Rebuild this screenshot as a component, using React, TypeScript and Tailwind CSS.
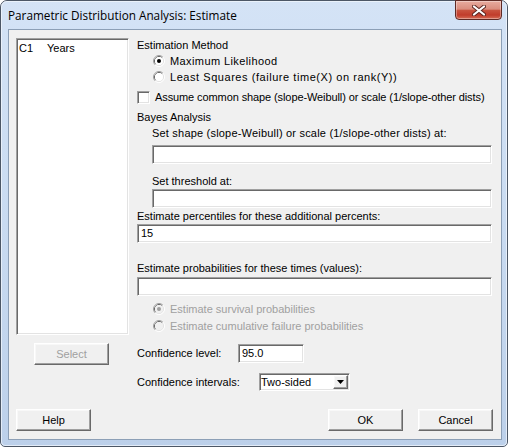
import React from "react";

const dlg =
  "font-['Liberation_Sans',Arial,sans-serif] text-[11px] leading-[13px] tracking-[0px] text-black";

const sunken =
  "border border-t-[#a0a0a0] border-l-[#a0a0a0] border-b-white border-r-white shadow-[inset_1px_1px_0_#696969,inset_-1px_-1px_0_#e3e3e3] bg-white";

const raised =
  "border border-t-white border-l-white border-b-[#696969] border-r-[#696969] shadow-[inset_-1px_-1px_0_#a0a0a0,inset_1px_1px_0_#f8f8f8] bg-[#f0f0f0]";

function Radio({ checked, disabled }: { checked?: boolean; disabled?: boolean }) {
  return (
    <svg width="12" height="12" viewBox="0 0 12 12" className="shrink-0">
      <path d="M2.11 9.89A5.5 5.5 0 0 1 9.89 2.11" fill="none" stroke="#a0a0a0" />
      <path d="M9.89 2.11A5.5 5.5 0 0 1 2.11 9.89" fill="none" stroke="#ffffff" />
      <path d="M2.82 9.18A4.5 4.5 0 0 1 9.18 2.82" fill="none" stroke="#696969" />
      <path d="M9.18 2.82A4.5 4.5 0 0 1 2.82 9.18" fill="none" stroke="#e3e3e3" />
      <circle cx="6" cy="6" r="4" fill={disabled ? "#f0f0f0" : "#ffffff"} />
      {checked && <circle cx="6" cy="6" r="2" fill={disabled ? "#a0a0a0" : "#000000"} />}
    </svg>
  );
}

function Button({ label, disabled, className }: { label: string; disabled?: boolean; className?: string }) {
  return (
    <div
      className={`w-[75px] h-[22px] flex items-center justify-center ${raised} ${
        disabled ? "text-[#a0a0a0]" : "text-black"
      } ${className ?? ""}`}
    >
      {label}
    </div>
  );
}

export default function App() {
  return (
    <div className="relative w-[508px] h-[447px] rounded-t-[7px] rounded-b-[5px] border border-[#4c5766] bg-gradient-to-b from-[#d4e3f6] via-[#c9dbf1] to-[#bcd0ea]">
      <div className="flex flex-col w-full h-full rounded-t-[6px] rounded-b-[4px] border border-[#f4f8fd]/70">
        <div className="h-[27px] shrink-0 flex items-center pl-[6px] font-['Open_Sans',sans-serif] text-[11.75px] text-black">
          Parametric Distribution Analysis: Estimate
        </div>
        <div
          className={`ml-[6px] w-[494px] h-[411px] shrink-0 border border-[#8c9fb6] bg-[#f0f0f0] flex flex-col ${dlg}`}
        >
          <div className="flex pl-[7px] pt-[7px]">
            {/* left column */}
            <div className="flex flex-col w-[113px] mt-[1px]">
              <div className={`h-[297px] ${sunken} pl-[2px] pt-[1px]`}>
                <div className="flex h-[16px] items-center">
                  <span className="w-[28px]">C1</span>
                  <span>Years</span>
                </div>
              </div>
              <Button label="Select" disabled className="mt-[8px] ml-[18px]" />
            </div>

            {/* right column */}
            <div className="ml-[8px] w-[355px] flex flex-col">
              <div className="h-[16px] flex items-center">Estimation Method</div>
              <div className="h-[16px] flex items-center pl-[16px] gap-[5px]">
                <Radio checked />
                <span className="tracking-[0.4px]">Maximum Likelihood</span>
              </div>
              <div className="h-[16px] flex items-center pl-[16px] gap-[5px]">
                <Radio />
                <span className="tracking-[0.55px]">Least Squares (failure time(X) on rank(Y))</span>
              </div>
              <div className="mt-[4px] h-[16px] flex items-center gap-[5px]">
                <div className={`w-[13px] h-[13px] shrink-0 ${sunken}`} />
                <span className="tracking-[-0.1px]">Assume common shape (slope-Weibull) or scale (1/slope-other dists)</span>
              </div>
              <div className="mt-[4px] h-[16px] flex items-center">Bayes Analysis</div>
              <div className="h-[16px] flex items-center pl-[15px] tracking-[0.2px]">
                Set shape (slope-Weibull) or scale (1/slope-other dists) at:
              </div>
              <div className={`mt-[4px] ml-[15px] w-[340px] h-[19px] ${sunken}`} />
              <div className="mt-[9px] h-[16px] flex items-center pl-[15px]">Set threshold at:</div>
              <div className={`ml-[15px] w-[340px] h-[19px] ${sunken}`} />
              <div className="h-[16px] flex items-center">Estimate percentiles for these additional percents:</div>
              <div className={`w-[355px] h-[19px] ${sunken} flex items-center pl-[3px]`}>15</div>
              <div className="mt-[17px] h-[16px] flex items-center">Estimate probabilities for these times (values):</div>
              <div className={`mt-[1px] w-[355px] h-[19px] ${sunken}`} />
              <div className="mt-[5px] h-[16px] flex items-center pl-[16px] gap-[5px] text-[#a0a0a0]">
                <Radio checked disabled />
                <span>Estimate survival probabilities</span>
              </div>
              <div className="mt-[1px] h-[16px] flex items-center pl-[16px] gap-[5px] text-[#a0a0a0]">
                <Radio disabled />
                <span>Estimate cumulative failure probabilities</span>
              </div>
              <div className="mt-[10px] h-[19px] flex items-center">
                <span className="w-[101px]">Confidence level:</span>
                <div className={`w-[66px] h-[19px] ${sunken} flex items-center pl-[3px]`}>95.0</div>
              </div>
              <div className="mt-[10px] h-[18px] flex items-center">
                <span className="w-[122px]">Confidence intervals:</span>
                <div className={`w-[91px] h-[18px] ${sunken} flex items-center justify-between pl-[1px] pr-[1px]`}>
                  <span>Two-sided</span>
                  <div className={`w-[15px] h-[14px] ${raised} flex items-center justify-center`}>
                    <svg width="7" height="4" viewBox="0 0 7 4">
                      <path d="M0 0H7L3.5 4Z" fill="#000" />
                    </svg>
                  </div>
                </div>
              </div>
            </div>
          </div>

          <div className="mt-auto flex pl-[7px] pr-[8px] pb-[8px]">
            <Button label="Help" />
            <Button label="OK" className="ml-auto" />
            <Button label="Cancel" className="ml-[15px]" />
          </div>
        </div>
      </div>

      {/* close button */}
      <div className="absolute top-[-1px] right-[5px] w-[47px] h-[20px] rounded-b-[4px] border border-[#5e2a25] bg-[linear-gradient(to_bottom,#e8ab9f_0%,#da8d7e_45%,#c9533f_52%,#c13c2b_78%,#d66d57_100%)] shadow-[inset_0_0_0_1px_rgba(255,255,255,0.35)] flex items-center justify-center">
        <svg width="14" height="11" viewBox="0 0 14 11">
          <path d="M2 1.5L12 9.5M12 1.5L2 9.5" stroke="#5a2520" strokeWidth="4" strokeLinecap="round" />
          <path d="M2 1.5L12 9.5M12 1.5L2 9.5" stroke="#ffffff" strokeWidth="2.2" strokeLinecap="round" />
        </svg>
      </div>
    </div>
  );
}
